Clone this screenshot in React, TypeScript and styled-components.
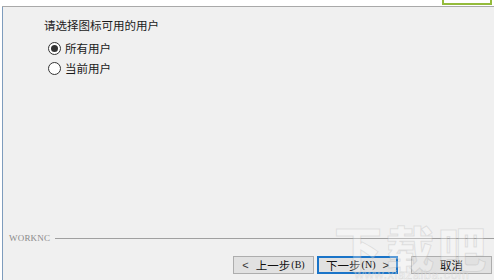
import React from "react";
import styled, { createGlobalStyle } from "styled-components";

const Global = createGlobalStyle`
  html, body { margin: 0; padding: 0; background: #f0f0f0; }
  body { font-family: "Noto Sans CJK SC", "Noto Sans", sans-serif; }
`;

const Window = styled.div`
  position: relative;
  width: 494px;
  height: 280px;
  overflow: hidden;
  background: #f0f0f0;
  display: flex;
  flex-direction: column;
  border-left: 2px solid #ffffff;
  box-sizing: border-box;
`;

const Frame = styled.div`
  flex: 1;
  display: flex;
  flex-direction: column;
  border-left: 1px solid #7e9cbd;
`;

const Header = styled.div`
  height: 6px;
  background: #ffffff;
  border-bottom: 1px solid #a9a9a9;
  display: flex;
  justify-content: flex-end;
  align-items: flex-end;
  padding-right: 2px;
  margin-left: -3px;
`;

const HighlightBox = styled.div`
  width: 46px;
  height: 4px;
  margin-bottom: 1px;
  border: 2px solid #94bb3c;
  border-top: none;
  background: #ffffff;
`;

const Content = styled.div`
  flex: 1;
  padding: 10px 0 0 41px;
  display: flex;
  flex-direction: column;
`;

const Prompt = styled.div`
  font-size: 11.5px;
  line-height: 16px;
  color: #1a1a1a;
`;

const RadioList = styled.div`
  display: flex;
  flex-direction: column;
  gap: 5px;
  margin-top: 8px;
  padding-left: 4px;
`;

const RadioRow = styled.label`
  display: flex;
  align-items: center;
  gap: 4px;
  font-size: 11.5px;
  line-height: 15px;
  color: #1a1a1a;
`;

const RadioCircle = styled.span<{ $checked?: boolean }>`
  width: 11px;
  height: 11px;
  border-radius: 50%;
  border: 1px solid #333333;
  background: #ffffff;
  display: flex;
  align-items: center;
  justify-content: center;
  &::after {
    content: "";
    width: 7px;
    height: 7px;
    border-radius: 50%;
    background: ${(p) => (p.$checked ? "#333333" : "transparent")};
  }
`;

const Footer = styled.div`
  display: flex;
  flex-direction: column;
  padding-bottom: 6px;
`;

const Brand = styled.div`
  display: flex;
  align-items: center;
  gap: 5px;
  padding-left: 6px;
  height: 12px;
`;

const BrandText = styled.span`
  font-family: "Liberation Serif", serif;
  font-size: 9px;
  letter-spacing: 0.2px;
  color: #8a8a8a;
`;

const Rule = styled.div`
  flex: 1;
  height: 1px;
  background: #a0a0a0;
`;

const ButtonRow = styled.div`
  display: flex;
  gap: 3px;
  padding: 12px 0 0 230px;
`;

const Button = styled.button<{ $primary?: boolean; $gap?: number }>`
  width: 81px;
  height: 18px;
  margin-left: ${(p) => p.$gap ?? 0}px;
  box-sizing: border-box;
  padding: 0;
  font-family: "Noto Sans CJK SC", sans-serif;
  font-size: 11.5px;
  line-height: 14px;
  color: #111111;
  background: #e1e1e1;
  border: ${(p) => (p.$primary ? "2px solid #1a74c8" : "1px solid #adadad")};
  display: flex;
  align-items: center;
  justify-content: center;
  gap: 1px;
`;

const Chevron = styled.span<{ $side: "left" | "right" }>`
  font-family: "Liberation Sans", sans-serif;
  font-size: 11px;
  color: #333333;
  margin: ${(p) => (p.$side === "left" ? "0 6px 0 0" : "0 0 0 6px")};
`;

const Mnemonic = styled.span`
  font-family: "Liberation Serif", serif;
  font-size: 10px;
`;

const Watermark = styled.div`
  position: absolute;
  right: 4px;
  bottom: -1px;
  display: flex;
  flex-direction: column;
  align-items: center;
  pointer-events: none;
`;

const WatermarkTitle = styled.div`
  font-family: "Noto Sans CJK SC", sans-serif;
  font-weight: 900;
  font-size: 48px;
  line-height: 46px;
  letter-spacing: 4px;
  color: rgba(255, 255, 255, 0.3);
  -webkit-text-stroke: 1px rgba(160, 160, 160, 0.25);
`;

const WatermarkUrl = styled.div`
  font-family: "Liberation Sans", sans-serif;
  font-size: 13px;
  line-height: 12px;
  letter-spacing: 0.5px;
  color: rgba(255, 255, 255, 0.35);
  -webkit-text-stroke: 0.5px rgba(160, 160, 160, 0.3);
`;

export default function App() {
  return (
    <>
      <Global />
      <Window>
        <Frame>
          <Header>
            <HighlightBox />
          </Header>
          <Content>
            <Prompt>请选择图标可用的用户</Prompt>
            <RadioList>
              <RadioRow>
                <RadioCircle $checked />
                所有用户
              </RadioRow>
              <RadioRow>
                <RadioCircle />
                当前用户
              </RadioRow>
            </RadioList>
          </Content>
          <Footer>
            <Brand>
              <BrandText>WORKNC</BrandText>
              <Rule />
            </Brand>
            <ButtonRow>
              <Button>
                <Chevron $side="left">&lt;</Chevron>上一步<Mnemonic>(B)</Mnemonic>
              </Button>
              <Button $primary>
                下一步<Mnemonic>(N)</Mnemonic>
                <Chevron $side="right">&gt;</Chevron>
              </Button>
              <Button $gap={10}>取消</Button>
            </ButtonRow>
          </Footer>
        </Frame>
        <Watermark>
          <WatermarkTitle>下载吧</WatermarkTitle>
          <WatermarkUrl>www.xiazaiba.com</WatermarkUrl>
        </Watermark>
      </Window>
    </>
  );
}
